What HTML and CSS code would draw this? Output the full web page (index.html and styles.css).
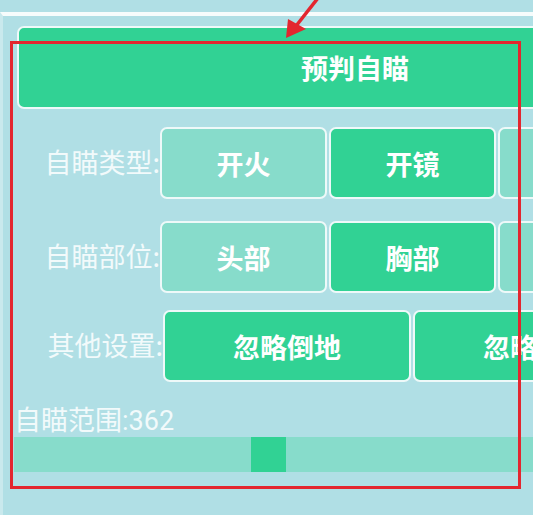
FILE: index.html
```html
<!DOCTYPE html>
<html lang="zh-CN">
<head>
<meta charset="utf-8">
<title>预判自瞄</title>
<link rel="stylesheet" href="styles.css">
</head>
<body>
<div class="topbar"></div>
<div class="panel">
  <div class="header-btn">预判自瞄</div>
  <div class="row">
    <div class="label">自瞄类型:</div>
    <div class="btn off">开火</div>
    <div class="btn on">开镜</div>
    <div class="btn off">自动</div>
  </div>
  <div class="row row-2">
    <div class="label">自瞄部位:</div>
    <div class="btn off">头部</div>
    <div class="btn on">胸部</div>
    <div class="btn off">腿部</div>
  </div>
  <div class="row row-3">
    <div class="label label-wide">其他设置:</div>
    <div class="btn wide on">忽略倒地</div>
    <div class="btn wide on">忽略人机</div>
  </div>
  <div class="slider-label">自瞄范围:362</div>
  <div class="track"><div class="thumb"></div></div>
</div>
<div class="mark"></div>
<svg class="arrow" width="533" height="50" viewBox="0 0 533 50">
  <line x1="318" y1="-2" x2="296" y2="26" stroke="#e3262f" stroke-width="3.5"/>
  <polygon points="286,38 288,19 306,29" fill="#e3262f"/>
</svg>
</body>
</html>
```
FILE: styles.css
```css
html, body {
  margin: 0;
  padding: 0;
  overflow: hidden;
  background: #b0dfe5;
  width: 533px;
  height: 515px;
}
body {
  position: relative;
  font-family: "Noto Sans CJK SC", "Roboto", sans-serif;
  color: #fff;
}
.topbar {
  height: 12px;
}
.panel {
  width: 760px;
  height: 520px;
  border-top: 4px solid #f6fcfc;
  border-left: 3px solid #c9e9ed;
  box-sizing: border-box;
  padding-top: 10px;
}
.header-btn {
  margin-left: 14px;
  width: 676px;
  height: 83px;
  box-sizing: border-box;
  border: 2px solid #eef9f9;
  border-radius: 7px;
  background: #31d294;
  display: flex;
  align-items: center;
  justify-content: center;
  font-size: 27px;
  font-weight: 700;
}
.row {
  display: flex;
  align-items: center;
  gap: 2px;
  margin-top: 18px;
}
.row-2 { margin-top: 22px; }
.row-3 { margin-top: 17px; }
.label {
  width: 157px;
  flex: none;
  text-align: right;
  font-size: 27px;
  line-height: 30px;
  padding-bottom: 3px;
  color: #f2fafb;
  margin-right: -2px;
}
.label-wide {
  width: 160px;
}
.btn {
  flex: none;
  width: 167px;
  height: 72px;
  box-sizing: border-box;
  border: 2px solid #eef9f9;
  border-radius: 7px;
  display: flex;
  align-items: center;
  justify-content: center;
  font-size: 27px;
  font-weight: 700;
}
.btn.wide {
  width: 248px;
}
.on { background: #31d294; }
.off { background: #87dccb; }
.slider-label {
  margin-top: 23px;
  margin-left: 11px;
  font-family: "Roboto", "Noto Sans CJK SC", sans-serif;
  font-size: 27px;
  line-height: 32px;
  color: #f2fafb;
}
.track {
  margin-left: 11px;
  width: 680px;
  height: 35px;
  background: #87dccb;
  display: flex;
}
.thumb {
  margin-left: 237px;
  width: 35px;
  height: 35px;
  background: #31d294;
}
.mark {
  position: absolute;
  left: 10px;
  top: 41px;
  width: 511px;
  height: 448px;
  box-sizing: border-box;
  border: 3.5px solid #e3262f;
}
.arrow {
  position: absolute;
  left: 0;
  top: 0;
}
```
